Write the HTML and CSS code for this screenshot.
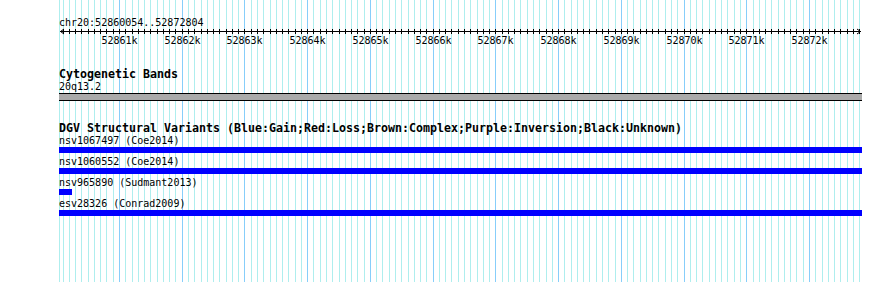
FILE: index.html
```html
<!DOCTYPE html>
<html lang="en">
<head>
    <meta charset="UTF-8">
    <title>chr20:52860054..52872804</title>
    <link rel="stylesheet" href="styles.css">
</head>
<body>

<div class="panel">
    <!-- grid lines drawn under the tracks -->
    <svg class="grid" id="grid" width="803" height="282"></svg>

    <div class="tracks">
        <div class="small">chr20:52860054..52872804</div>
        <svg class="ruler" id="ruler" width="803" height="18"></svg>

        <div class="track">
            <div class="title">Cytogenetic Bands</div>
            <div class="small">20q13.2</div>
            <div class="band"></div>
        </div>

        <div class="track">
            <div class="title">DGV Structural Variants (Blue:Gain;Red:Loss;Brown:Complex;Purple:Inversion;Black:Unknown)</div>
            <div class="feature">
                <div class="small">nsv1067497 (Coe2014)</div>
                <div class="bar"></div>
            </div>
            <div class="feature">
                <div class="small">nsv1060552 (Coe2014)</div>
                <div class="bar"></div>
            </div>
            <div class="feature">
                <div class="small">nsv965890 (Sudmant2013)</div>
                <div class="bar" style="width: 13px"></div>
            </div>
            <div class="feature">
                <div class="small">esv28326 (Conrad2009)</div>
                <div class="bar"></div>
            </div>
        </div>
    </div>
</div>

<script>
    var NS = 'http://www.w3.org/2000/svg';
    var LEFT = 59;

    // 52861k sits at x=119, 52872k at x=809
    function xPos(bp) {
        return Math.round(119 + (bp - 52861000) * 0.0627273) - LEFT;
    }

    function rect(svg, x, y, w, h, cls) {
        var r = document.createElementNS(NS, 'rect');
        r.setAttribute('x', x);
        r.setAttribute('y', y);
        r.setAttribute('width', w);
        r.setAttribute('height', h);
        r.setAttribute('class', cls);
        svg.appendChild(r);
    }

    var grid = document.getElementById('grid');
    var ruler = document.getElementById('ruler');

    rect(grid, 0, 0, 1, 282, 'minor');

    for (var bp = 52860100; bp <= 52872800; bp += 100) {
        var x = xPos(bp);
        var major = bp % 1000 === 0;
        rect(grid, x, 0, 1, 282, major ? 'major' : 'minor');
        rect(ruler, x, 0, 1, 5, 'tick');
        if (major) {
            var t = document.createElementNS(NS, 'text');
            t.setAttribute('x', x + 0.5);
            t.setAttribute('y', 15);
            t.setAttribute('class', 'tick-label');
            t.textContent = (bp / 1000) + 'k';
            ruler.appendChild(t);
        }
    }

    // axis with arrows at both ends
    rect(ruler, 1, 2, 801, 1, 'tick');
    var arrows = document.createElementNS(NS, 'path');
    arrows.setAttribute('d', 'M5 0 L1.5 2.5 L5 5 M798 0 L801.5 2.5 L798 5');
    arrows.setAttribute('class', 'arrow');
    ruler.appendChild(arrows);
</script>

</body>
</html>
```

FILE: styles.css
```css
body {
    margin: 0;
    background-color: white;
}

.panel {
    position: relative;
    width: 890px;
    height: 282px;
    overflow: hidden;
    font-family: "DejaVu Sans Mono", "Liberation Mono", monospace;
    color: black;
}

/* background grid, sits under every track */
.grid {
    position: absolute;
    left: 59px;
    top: 0;
    shape-rendering: crispEdges;
}
.grid .minor {
    fill: #aeeeee;
}
.grid .major {
    fill: #87cefa;
}

.tracks {
    position: relative;
    width: 803px;
    margin-left: 59px;
    padding-top: 16px;
}

.small {
    font-size: 10px;
    line-height: 13px;
    height: 13px;
    white-space: nowrap;
}

.title {
    font-size: 11.63px;
    font-weight: bold;
    line-height: 12px;
    height: 12px;
    white-space: nowrap;
}

.ruler {
    display: block;
    overflow: visible;
}
.ruler .tick {
    fill: black;
    shape-rendering: crispEdges;
}
.ruler .arrow {
    fill: none;
    stroke: black;
    stroke-width: 1;
}
.ruler .tick-label {
    font-family: "DejaVu Sans Mono", "Liberation Mono", monospace;
    font-size: 10px;
    text-anchor: middle;
    fill: black;
}

.track {
    margin-top: 21px;
}

.band {
    height: 6px;
    background-color: #aaaaaa;
    border-top: 1px solid black;
    border-bottom: 1px solid black;
}

.feature + .feature {
    margin-top: 2px;
}

.bar {
    width: 803px;
    height: 6px;
    background-color: #0000ff;
}
```
